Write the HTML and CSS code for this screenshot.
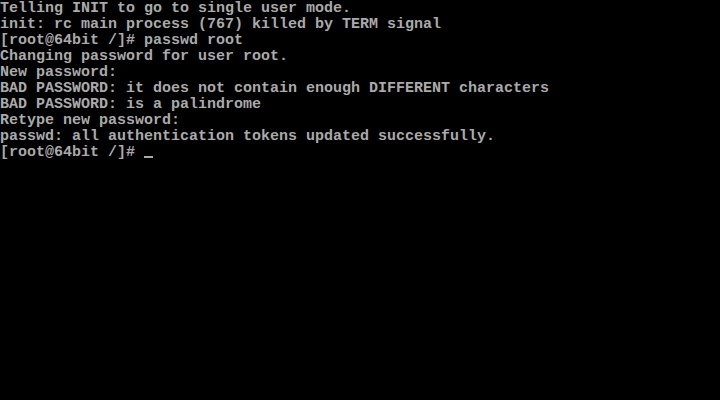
FILE: index.html
```html
<!DOCTYPE html>
<html lang="en">
<head>
    <meta charset="UTF-8">
    <meta name="viewport" content="width=device-width, initial-scale=1.0">
    <title>Console</title>
    <link rel="stylesheet" href="styles.css">
</head>
<body>
    <main class="console">
<pre class="screen">Telling INIT to go to single user mode.
init: rc main process (767) killed by TERM signal
[root@64bit /]# passwd root
Changing password for user root.
New password:
BAD PASSWORD: it does not contain enough DIFFERENT characters
BAD PASSWORD: is a palindrome
Retype new password:
passwd: all authentication tokens updated successfully.
[root@64bit /]# <span class="cursor"></span></pre>
    </main>
</body>
</html>
```

FILE: styles.css
```css
*, ::before, ::after {
    margin: 0;
    padding: 0;
    box-sizing: border-box;
}

html, body {
    background-color: #000;
    height: 100%;
}

.console {
    width: 720px;
    height: 400px;
    overflow: hidden;
}

.screen {
    padding-top: 1px;
    font-family: "Liberation Mono", "DejaVu Sans Mono", monospace;
    font-size: 15px;
    font-weight: bold;
    line-height: 16px;
    color: #aaaaaa;
    white-space: pre;
}

.cursor {
    display: inline-block;
    width: 9px;
    height: 2px;
    background-color: #aaaaaa;
    vertical-align: -2px;
}
```
